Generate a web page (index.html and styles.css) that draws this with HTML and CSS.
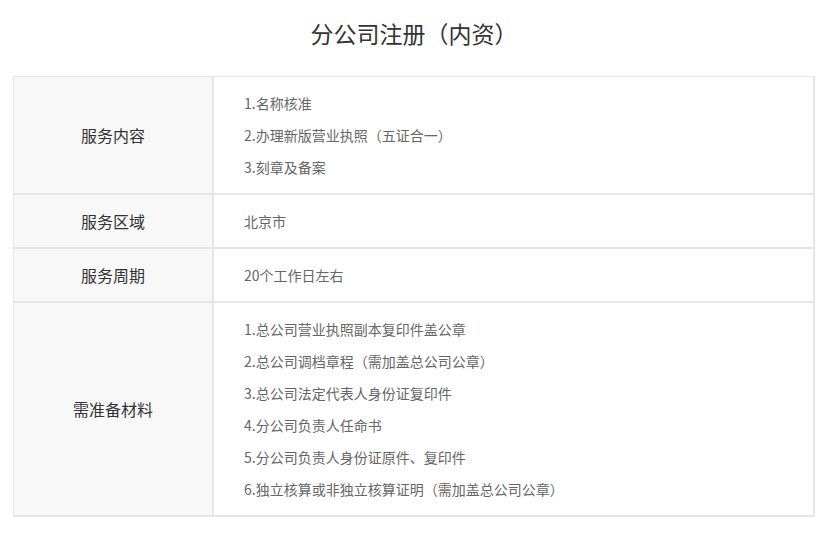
FILE: index.html
```html
<!DOCTYPE html>
<html lang="zh">
<head>
<meta charset="utf-8">
<link rel="stylesheet" href="styles.css">
</head>
<body>
<h1 class="title">分公司注册（内资）</h1>
<table class="info">
  <tr>
    <th class="label">服务内容</th>
    <td class="content">
      <p>1.名称核准</p>
      <p>2.办理新版营业执照（五证合一）</p>
      <p>3.刻章及备案</p>
    </td>
  </tr>
  <tr>
    <th class="label">服务区域</th>
    <td class="content"><p>北京市</p></td>
  </tr>
  <tr>
    <th class="label">服务周期</th>
    <td class="content"><p>20个工作日左右</p></td>
  </tr>
  <tr>
    <th class="label">需准备材料</th>
    <td class="content">
      <p>1.总公司营业执照副本复印件盖公章</p>
      <p>2.总公司调档章程（需加盖总公司公章）</p>
      <p>3.总公司法定代表人身份证复印件</p>
      <p>4.分公司负责人任命书</p>
      <p>5.分公司负责人身份证原件、复印件</p>
      <p>6.独立核算或非独立核算证明（需加盖总公司公章）</p>
    </td>
  </tr>
</table>
</body>
</html>
```

FILE: styles.css
```css
html, body {
  margin: 0;
  padding: 0;
  background: #fff;
}
body {
  font-family: "Microsoft YaHei", "Noto Sans CJK SC", "Noto Sans", sans-serif;
  padding: 18px 13px 0 13px;
}
.title {
  margin: 0 0 28px 0;
  font-size: 23px;
  line-height: 30px;
  font-weight: normal;
  color: #333;
  text-align: center;
}
.info {
  width: 802px;
  border-collapse: separate;
  border-spacing: 0;
  border-right: 1px solid #e6e6e6;
  border-bottom: 1px solid #e6e6e6;
}
.info th, .info td {
  border: 1px solid #e6e6e6;
  padding: 10px 0;
  vertical-align: middle;
}
.label {
  width: 198px;
  background: #f8f8f8;
  font-size: 16px;
  font-weight: normal;
  color: #333;
  text-align: center;
}
.content {
  padding-left: 30px !important;
  text-align: left;
  font-size: 14px;
  color: #666;
}
.content p {
  margin: 0;
  line-height: 32px;
}
```
